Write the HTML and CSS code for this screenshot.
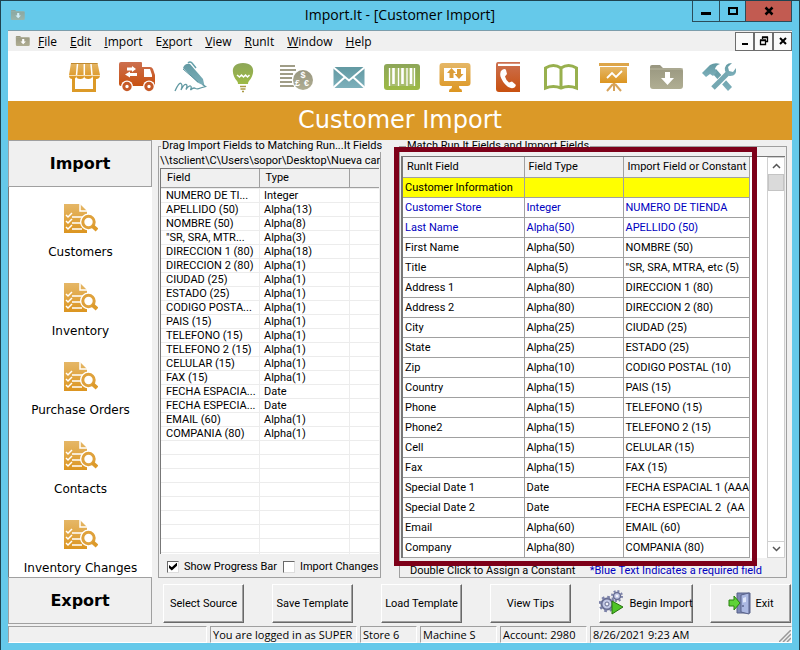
FILE: index.html
```html
<!DOCTYPE html>
<html lang="en">
<head>
	<meta charset="UTF-8">
	<title>Import.It - [Customer Import]</title>
	<link rel="stylesheet" href="styles.css">
</head>
<body>
	<svg class="defs" aria-hidden="true">
		<defs>
			<linearGradient id="gold" x1="0" y1="0" x2="0" y2="1"><stop offset="0" stop-color="#e5b767"/><stop offset="1" stop-color="#dc9520"/></linearGradient>
			<linearGradient id="rust" x1="0" y1="0" x2="0" y2="1"><stop offset="0" stop-color="#cc7050"/><stop offset="1" stop-color="#c8500f"/></linearGradient>
			<linearGradient id="teal" x1="0" y1="0" x2="0" y2="1"><stop offset="0" stop-color="#6299a2"/><stop offset="1" stop-color="#7db0bb"/></linearGradient>
			<linearGradient id="lime" x1="0" y1="0" x2="0" y2="1"><stop offset="0" stop-color="#8da658"/><stop offset="1" stop-color="#9dba45"/></linearGradient>
			<linearGradient id="sand" x1="0" y1="0" x2="0" y2="1"><stop offset="0" stop-color="#98967f"/><stop offset="1" stop-color="#b0ae93"/></linearGradient>
			<symbol id="report" viewBox="0 0 34 30">
				<path d="M0 0h16l7 7v22H0z" fill="url(#gold)"/>
				<path d="M16 0v7h7" fill="none" stroke="#fff" stroke-width="1.5"/>
				<path d="M8 13h11M8 19h9M8 25h10" stroke="#fff" stroke-width="1.6"/>
				<path d="M2 11l2 2 4-4M2 17l2 2 4-4M2 23l2 2 4-4" fill="none" stroke="#fff" stroke-width="1.5"/>
				<circle cx="24.500" cy="18" r="8.500" fill="#fff"/>
				<path d="M28 21l5 5" stroke="#fff" stroke-width="6"/>
				<circle cx="24.500" cy="18" r="5.700" fill="#fff" stroke="#dfa13b" stroke-width="3"/>
				<path d="M28.500 22l4.500 4" stroke="#dd9a2a" stroke-width="4"/>
			</symbol>
			<symbol id="folder" viewBox="0 0 38 34">
				<path d="M2 9V7q0-2 2-2h8l3 3h17q3 0 3 3v15q0 3-3 3H5q-3 0-3-3z" fill="url(#sand)"/>
				<path d="M2 9h33" stroke="#b9b7a0"/>
				<path d="M17 12h5v6h4l-6.500 7-6.500-7h4z" fill="#fff"/>
			</symbol>
		</defs>
	</svg>

	<div class="window">
		<header class="titlebar">
			<svg class="small-icon"><use href="#folder"/></svg>
			<span class="title">Import.It - [Customer Import]</span>
			<div class="window-buttons">
				<button class="minimize" aria-label="Minimize"><svg width="10" height="10"><path d="M0 6h10v3H0z"/></svg></button>
				<button class="maximize" aria-label="Maximize"><svg width="10" height="10"><path d="M1 2h8v6H1z" fill="none" stroke="#000" stroke-width="2"/></svg></button>
				<button class="close" aria-label="Close"><svg width="10" height="10"><path d="M1.500 1.500l7 7M8.500 1.500l-7 7" stroke="#000" stroke-width="2.500"/></svg></button>
			</div>
		</header>

		<nav class="menubar">
			<svg class="small-icon"><use href="#folder"/></svg>
			<button><u>F</u>ile</button>
			<button><u>E</u>dit</button>
			<button><u>I</u>mport</button>
			<button>E<u>x</u>port</button>
			<button><u>V</u>iew</button>
			<button><u>R</u>unIt</button>
			<button><u>W</u>indow</button>
			<button><u>H</u>elp</button>
			<div class="mdi-buttons">
				<button aria-label="Minimize child"><svg width="10" height="10"><path d="M2 7h6v2H2z"/></svg></button>
				<button aria-label="Restore child"><svg width="10" height="10"><path d="M3.500 3V1.500h5v4H7M3 1h6M1.500 4.500h5v4h-5zM1 4h6" fill="none" stroke="#000" stroke-width="1.300"/></svg></button>
				<button aria-label="Close child"><svg width="10" height="10"><path d="M2 2l6 6M8 2l-6 6" stroke="#000" stroke-width="2"/></svg></button>
			</div>
		</nav>

		<div class="toolbar">
			<button aria-label="Store"><svg viewBox="0 0 38 34">
				<path d="M8.500 18v12.500h21V18" fill="none" stroke="#dc9a28" stroke-width="3"/>
				<path d="M6 3h26.500l2.500 12q0 4-3.800 4t-4-3q0 3-4 3t-4-3q0 3-4 3t-4-3q0 3-3.700 3T4 15z" fill="url(#gold)"/>
				<path d="M12.500 4l-1 11M19.300 4v11M26 4l1 11" stroke="#fff" stroke-width="1.500"/>
				<path d="M6 3.500h26.500" stroke="#c08a30"/><path d="M4 15.500h31" stroke="#f5dfb5"/>
			</svg></button>
			<button aria-label="Delivery"><svg viewBox="0 0 38 34">
				<path d="M1 4q0-2 2-2h20q1 0 1 1v4h8q2 0 3 2l2 6v9q0 2-2 2H3q-2 0-2-2z" fill="url(#rust)"/>
				<path d="M26 9h6l2 6v2h-8z" fill="#fff"/>
				<path d="M9 7.500h5V6l4 3-4 3v-1.500H9zM19 13h-7v-1.500l-5 3 5 3V16h7z" fill="#fff"/>
				<circle cx="9" cy="26.500" r="6" fill="#fff"/><circle cx="31" cy="26.500" r="6" fill="#fff"/>
				<circle cx="9" cy="26.500" r="3.200" fill="none" stroke="#c65a28" stroke-width="3"/><circle cx="31" cy="26.500" r="3.200" fill="none" stroke="#c65a28" stroke-width="3"/>
			</svg></button>
			<button aria-label="Signature"><svg viewBox="0 0 38 34">
				<path d="M12 8q2-5 7-4l13 15 1.500 7-7-3.500z" fill="url(#teal)"/>
				<path d="M12 9l15 13" stroke="#5b939e"/><path d="M17 3q2-2 4 0l4 5" fill="none" stroke="#64a0aa" stroke-width="1.500"/>
				<path d="M4 31q4-9 6-7.500t0 6.500q3-6 5-5.500t0 5q3-4 4.500-3.500t0 4q3-3 5-1.500 2 1 5-.5l5-1.500-3-2" fill="none" stroke="#6299a2" stroke-width="1.300"/>
			</svg></button>
			<button aria-label="Ideas"><svg viewBox="0 0 38 34">
				<path d="M19 3c14 0 11 13 6 18q-1 1-1 3H14q0-2-1-3C8 16 5 3 19 3z" fill="url(#lime)"/>
				<path d="M13 15l2.500 2 2-2 2 2 2-2 2 2 2-2" fill="none" stroke="#fff" stroke-width="1.500"/>
				<path d="M16 26.500h6M16.500 29h5M18 31.500h2" stroke="#aa9a45" stroke-width="1.500"/>
			</svg></button>
			<button aria-label="Currency"><svg viewBox="0 0 38 34">
				<path d="M3 6h15M3 10h16M3 14h13M3 18h12M3 22h12M3 26h14" stroke="#a09d87" stroke-width="2"/>
				<circle cx="26" cy="20" r="11" fill="#fff"/><circle cx="26" cy="20" r="10" fill="url(#sand)"/>
				<text class="coin" x="23.500" y="18">$</text><text class="coin" x="18" y="26">£</text><text class="coin" x="27" y="26">€</text>
			</svg></button>
			<button aria-label="Mail"><svg viewBox="0 0 38 34">
				<path d="M3.500 7h31v21h-31z" fill="url(#teal)"/>
				<path d="M3 7l16 13.500L35 7M3 28l12-11M35 28L23 17" fill="none" stroke="#fff" stroke-width="2"/>
			</svg></button>
			<button aria-label="Barcode"><svg viewBox="0 0 38 34">
				<rect x="1" y="4" width="36" height="26" rx="3" fill="url(#lime)"/>
				<path d="M6 8h26v18H6z" fill="#a9bd70"/>
				<path d="M6.500 8v18M15.500 8v18M24 8v18M31.500 8v18" stroke="#fff" stroke-width="1.300"/><path d="M10.500 8v16M19.500 8v16M28 8v16" stroke="#fff" stroke-width="2.600"/>
			</svg></button>
			<button aria-label="Transfer"><svg viewBox="0 0 38 34">
				<path d="M6.500 3h25q3 0 3 3v17q0 3-3 3H23q0 3 2 3 1 0 1 3H13q0-3 1-3 2 0 2-3H6.500q-3 0-3-3V6q0-3 3-3z" fill="url(#gold)"/>
				<path d="M8 8h22v13H8z" fill="#fff"/>
				<path d="M13.500 18v-5H11l4.500-5 4.500 5h-2.500v5zM21 9v5h-2.500l4.500 5 4.500-5H25V9z" fill="#dc9d36"/>
			</svg></button>
			<button aria-label="Phone Book"><svg viewBox="0 0 38 34">
				<path d="M9 2h22v2H9v2h22v26H10q-3 0-3-3V5q0-3 2-3z" fill="url(#rust)"/><path d="M9 4.500h22" stroke="#fff" stroke-width="1.500"/>
				<path d="M13 10q3-2 4 0l1 4-2 2.500q1 4 4 6l3-1 3.500 3q1 1-1 3-3 2-7-1-5-4-7-10-1-5 1.500-6.500z" fill="#fff"/>
			</svg></button>
			<button aria-label="Book"><svg viewBox="0 0 38 34">
				<path d="M3.500 28V8q8-5 15.500 0 7.500-5 15.500 0v20q-8-3-15.500 0-7.500-3-15.500 0zM19 8v20" fill="#fff" stroke="#98b04e" stroke-width="3"/>
			</svg></button>
			<button aria-label="Charts"><svg viewBox="0 0 38 34">
				<path d="M4 3h30v3H4z" fill="#dda549"/><path d="M5 7h27v16H5z" fill="url(#gold)"/>
				<path d="M12 18l5-5 4 4 6-6" fill="none" stroke="#fff" stroke-width="1.800"/>
				<path d="M19 23v8M18 24l-6 7M20 24l6 7" stroke="#d7a35a" stroke-width="2"/>
			</svg></button>
			<button aria-label="Import Folder"><svg><use href="#folder"/></svg></button>
			<button aria-label="Tools"><svg viewBox="0 0 38 34">
				<path d="M11 13l4-4 16 18-4 4z" fill="url(#teal)"/>
				<path d="M29 11L11 30" stroke="#fff" stroke-width="7"/>
				<path d="M27 13L12 28" stroke="#75a8b2" stroke-width="5"/>
				<path d="M1 13l8-8q5-3 10-1-4 1-5 5l2 3-4 4-3-2-4 3z" fill="url(#teal)"/>
				<path d="M31 3q-8 0-7 8l4 5q8 1 7-8l-3 4-4-1-1-4z" fill="url(#teal)"/>
			</svg></button>
		</div>

		<h1 class="banner">Customer Import</h1>

		<main class="workspace">
			<aside class="sidebar">
				<button class="section">Import</button>
				<div class="items">
					<button class="item"><svg><use href="#report"/></svg>Customers</button>
					<button class="item"><svg><use href="#report"/></svg>Inventory</button>
					<button class="item"><svg><use href="#report"/></svg>Purchase Orders</button>
					<button class="item"><svg><use href="#report"/></svg>Contacts</button>
					<button class="item"><svg><use href="#report"/></svg>Inventory Changes</button>
				</div>
				<button class="section">Export</button>
			</aside>

			<fieldset class="group source">
				<legend>Drag Import Fields to Matching Run...It Fields</legend>
				<div class="path">\\tsclient\C\Users\sopor\Desktop\Nueva carp</div>
				<div class="listbox">
					<table>
						<thead><tr><th class="col-field">Field</th><th class="col-type">Type</th><th></th></tr></thead>
						<tbody>
							<tr><td>NUMERO DE TI...</td><td>Integer</td><td></td></tr>
							<tr><td>APELLIDO (50)</td><td>Alpha(13)</td><td></td></tr>
							<tr><td>NOMBRE (50)</td><td>Alpha(8)</td><td></td></tr>
							<tr><td>"SR, SRA, MTR...</td><td>Alpha(3)</td><td></td></tr>
							<tr><td>DIRECCION 1 (80)</td><td>Alpha(18)</td><td></td></tr>
							<tr><td>DIRECCION 2 (80)</td><td>Alpha(1)</td><td></td></tr>
							<tr><td>CIUDAD (25)</td><td>Alpha(1)</td><td></td></tr>
							<tr><td>ESTADO (25)</td><td>Alpha(1)</td><td></td></tr>
							<tr><td>CODIGO POSTA...</td><td>Alpha(1)</td><td></td></tr>
							<tr><td>PAIS (15)</td><td>Alpha(1)</td><td></td></tr>
							<tr><td>TELEFONO (15)</td><td>Alpha(1)</td><td></td></tr>
							<tr><td>TELEFONO 2 (15)</td><td>Alpha(1)</td><td></td></tr>
							<tr><td>CELULAR (15)</td><td>Alpha(1)</td><td></td></tr>
							<tr><td>FAX (15)</td><td>Alpha(1)</td><td></td></tr>
							<tr><td>FECHA ESPACIA...</td><td>Date</td><td></td></tr>
							<tr><td>FECHA ESPECIA...</td><td>Date</td><td></td></tr>
							<tr><td>EMAIL (60)</td><td>Alpha(1)</td><td></td></tr>
							<tr><td>COMPANIA (80)</td><td>Alpha(1)</td><td></td></tr>
						</tbody>
					</table>
				</div>
				<div class="options">
					<label for="progress"><input type="checkbox" id="progress" checked>Show Progress Bar</label>
					<label for="changes"><input type="checkbox" id="changes">Import Changes</label>
				</div>
			</fieldset>

			<fieldset class="group match">
				<legend>Match Run It Fields and Import Fields</legend>
				<div class="grid-box">
					<table>
						<thead><tr><th>RunIt Field</th><th>Field Type</th><th>Import Field or Constant</th></tr></thead>
						<tbody>
							<tr class="heading"><td>Customer Information</td><td></td><td></td></tr>
							<tr class="required"><td>Customer Store</td><td>Integer</td><td>NUMERO DE TIENDA</td></tr>
							<tr class="required"><td>Last Name</td><td>Alpha(50)</td><td>APELLIDO (50)</td></tr>
							<tr><td>First Name</td><td>Alpha(50)</td><td>NOMBRE (50)</td></tr>
							<tr><td>Title</td><td>Alpha(5)</td><td>"SR, SRA, MTRA, etc (5)</td></tr>
							<tr><td>Address 1</td><td>Alpha(80)</td><td>DIRECCION 1 (80)</td></tr>
							<tr><td>Address 2</td><td>Alpha(80)</td><td>DIRECCION 2 (80)</td></tr>
							<tr><td>City</td><td>Alpha(25)</td><td>CIUDAD (25)</td></tr>
							<tr><td>State</td><td>Alpha(25)</td><td>ESTADO (25)</td></tr>
							<tr><td>Zip</td><td>Alpha(10)</td><td>CODIGO POSTAL (10)</td></tr>
							<tr><td>Country</td><td>Alpha(15)</td><td>PAIS (15)</td></tr>
							<tr><td>Phone</td><td>Alpha(15)</td><td>TELEFONO (15)</td></tr>
							<tr><td>Phone2</td><td>Alpha(15)</td><td>TELEFONO 2 (15)</td></tr>
							<tr><td>Cell</td><td>Alpha(15)</td><td>CELULAR (15)</td></tr>
							<tr><td>Fax</td><td>Alpha(15)</td><td>FAX (15)</td></tr>
							<tr><td>Special Date 1</td><td>Date</td><td>FECHA ESPACIAL 1 (AAA</td></tr>
							<tr><td>Special Date 2</td><td>Date</td><td>FECHA ESPECIAL 2&nbsp; (AA</td></tr>
							<tr><td>Email</td><td>Alpha(60)</td><td>EMAIL (60)</td></tr>
							<tr><td>Company</td><td>Alpha(80)</td><td>COMPANIA (80)</td></tr>
						</tbody>
					</table>
					<div class="scrollbar">
						<button aria-label="Scroll up"><svg width="9" height="6"><path d="M1 5l3.500-3.500L8 5" fill="none" stroke="#555" stroke-width="1.500"/></svg></button>
						<div class="thumb"></div>
						<button class="down" aria-label="Scroll down"><svg width="9" height="6"><path d="M1 1l3.500 3.500L8 1" fill="none" stroke="#555" stroke-width="1.500"/></svg></button>
					</div>
				</div>
				<div class="hints"><span>Double Click to Assign a Constant</span><span class="note">*Blue Text Indicates a required field</span></div>
				<div class="highlight"></div>
			</fieldset>

			<div class="actions">
				<button>Select Source</button>
				<button>Save Template</button>
				<button>Load Template</button>
				<button>View Tips</button>
				<button class="begin"><svg width="26" height="26" viewBox="0 0 26 26">
					<circle cx="8" cy="14" r="5.500" fill="#c3c9e6" stroke="#676d92" stroke-width="2"/>
					<circle cx="8" cy="14" r="7" fill="none" stroke="#7c82a8" stroke-width="2.500" stroke-dasharray="2.700 2.800"/>
					<circle cx="8" cy="14" r="2" fill="#f3f3fa" stroke="#676d92"/>
					<circle cx="18" cy="6" r="3.500" fill="#c3c9e6" stroke="#676d92" stroke-width="1.500"/>
					<circle cx="18" cy="6" r="5" fill="none" stroke="#7c82a8" stroke-width="2" stroke-dasharray="2 1.900"/>
					<circle cx="18" cy="6" r="1.300" fill="#f3f3fa"/>
					<path d="M13 11l11 6-11 7z" fill="#4fc427" stroke="#26730f"/>
				</svg>Begin Import</button>
				<button class="exit"><svg width="24" height="24" viewBox="0 0 24 24">
					<path d="M9 2h13v20H9z" fill="#7d88b4" stroke="#59628a"/>
					<path d="M13 4l8-2v21l-8-2z" fill="#abb8e2" stroke="#59628a"/>
					<path d="M15 7l3-1v5l-3 .5z" fill="#dfe6fa"/><path d="M15 14v2" stroke="#39406a"/>
					<path d="M1 9h5V5l6 7-6 7v-4H1z" fill="#5ed336" stroke="#28810f"/>
				</svg>Exit</button>
			</div>
		</main>

		<footer class="statusbar">
			<span class="blank"></span>
			<span class="user">You are logged in as SUPER</span>
			<span class="store">Store 6</span>
			<span class="machine">Machine S</span>
			<span class="account">Account: 2980</span>
			<span class="clock">8/26/2021 9:23 AM<svg width="12" height="12"><path d="M0 12L12 0M4 12l8-8M8 12l4-4" stroke="#999" stroke-width="1.500"/></svg></span>
		</footer>
	</div>
</body>
</html>
```

FILE: styles.css
```css
* {
	box-sizing: border-box;
}

body {
	margin: 0;
	font-family: Roboto, "Liberation Sans", sans-serif;
	font-size: 11px;
	color: #000;
}

button {
	margin: 0;
	padding: 0;
	border: 0;
	background: none;
	font: inherit;
	color: inherit;
}

svg {
	flex: none;
}

.defs {
	position: absolute;
	width: 0;
	height: 0;
}

.window {
	display: flex;
	flex-direction: column;
	min-height: 100vh;
	padding: 0 7px 7px;
	border: 1px solid #1e4350;
	background: #65c9ea;
}

/* title bar and menu */
.titlebar {
	display: grid;
	grid-template-columns: 1fr auto 1fr;
	height: 29px;
	font: 14px "Open Sans", sans-serif;
}

.small-icon {
	width: 16px;
	height: 16px;
}

.titlebar .small-icon {
	margin: 6px 2px;
	opacity: 0.7;
}

.title {
	line-height: 28px;
}

.window-buttons {
	display: flex;
	justify-self: end;
	height: 21px;
	border: 1px solid #2b4c5a;
	border-top: 0;
}

.window-buttons button {
	display: grid;
	place-items: center;
	width: 26px;
}

.window-buttons button + button {
	border-left: 1px solid #2b4c5a;
}

.window-buttons .close {
	width: 46px;
	background: #c25b51;
}

.menubar {
	display: flex;
	align-items: center;
	gap: 13px;
	height: 21px;
	padding-left: 7px;
	border-top: 1px solid #7c9dab;
	background: #f0f0f0;
	font: 12px "Open Sans", sans-serif;
}

.menubar .small-icon {
	margin-right: -6px;
}

.mdi-buttons {
	display: flex;
	margin-left: auto;
}

.mdi-buttons button {
	display: grid;
	place-items: center;
	width: 19px;
	height: 19px;
	border: 1px solid #6d6d6d;
	background: #fafafa;
}

.toolbar {
	display: flex;
	justify-content: center;
	height: 50px;
	padding: 9px 0 0 4px;
	background: #fff;
}

.toolbar button {
	width: 53px;
	height: 34px;
}

.toolbar svg {
	width: 38px;
	height: 34px;
}

.coin {
	font: bold 9px "Liberation Sans", sans-serif;
	fill: #fff;
}

.banner {
	margin: 0;
	background: #db9927;
	color: #fff;
	font: 24px/39px "DejaVu Sans", Verdana, sans-serif;
	text-align: center;
}

/* main area */
.workspace {
	flex: 1;
	display: grid;
	grid-template-columns: 144px minmax(0, 229fr) minmax(0, 411fr);
	grid-template-rows: 1fr 46px;
	background: #f0f0f0;
}

.sidebar {
	grid-row: 1 / 3;
	display: flex;
	flex-direction: column;
	font: 12px "DejaVu Sans", Verdana, sans-serif;
}

.section {
	height: 47px;
	border: 1px solid #a0a0a0;
	background: #f0f0f0;
	font-size: 16px;
	font-weight: bold;
}

.items {
	flex: 1;
	display: flex;
	flex-direction: column;
	gap: 17px;
	padding-top: 17px;
	border-left: 1px solid #777;
	background: #fff;
}

.item {
	display: flex;
	flex-direction: column;
	align-items: center;
	gap: 11px;
	height: 62px;
}

.item:last-child {
	height: 55px;
}

.item svg {
	width: 34px;
	height: 30px;
}

.group {
	position: relative;
	display: flex;
	flex-direction: column;
	min-width: 0;
	margin: 0;
	padding: 0;
	border: 1px solid #a0a0a0;
}

.group legend {
	margin-left: 2px;
	padding: 0 1px;
	line-height: 12px;
	white-space: nowrap;
}

.source {
	margin-left: 6px;
}

.path {
	overflow: hidden;
	padding: 2px 0 0 1px;
	line-height: 14px;
	white-space: nowrap;
}

.listbox {
	flex: 1;
	margin: 0 1px;
	border-top: 1px solid #777;
	border-left: 1px solid #777;
	background:
		linear-gradient(#ececec, #ececec) 98px 0 / 1px 100% no-repeat,
		linear-gradient(#ececec, #ececec) 188px 0 / 1px 100% no-repeat,
		repeating-linear-gradient(#ececec 0 1px, #fff 1px 14px) 0 19px;
}

table {
	border-collapse: collapse;
	table-layout: fixed;
}

th {
	font-weight: normal;
	text-align: left;
	background: #f0f0f0;
}

th, td {
	overflow: hidden;
	white-space: nowrap;
}

.listbox table {
	width: 100%;
}

.listbox th {
	height: 18px;
	padding: 0 6px;
	border-right: 1px solid #a0a0a0;
	border-bottom: 1px solid #a0a0a0;
}

.listbox th:last-child {
	border-right: 0;
}

.col-field {
	width: 98px;
}

.col-type {
	width: 90px;
}

.listbox td {
	height: 14px;
	padding: 2px 0 0 5px;
	line-height: 12px;
}

.options {
	display: flex;
	gap: 6px;
	height: 23px;
	padding: 3px 0 0 8px;
}

.options label {
	display: flex;
	align-items: center;
	gap: 5px;
	white-space: nowrap;
}

.options input {
	appearance: none;
	display: grid;
	place-items: center;
	width: 12px;
	height: 12px;
	margin: 0;
	border: 1px solid;
	border-color: #696969 #ddd #ddd #696969;
	background: #fff;
}

.options input:checked::before {
	content: "";
	width: 8px;
	height: 8px;
	background: #000;
	clip-path: polygon(0 30%, 35% 60%, 100% 0, 100% 40%, 35% 100%, 0 70%);
}

.match {
	margin: 0 5px 0 18px;
}

.match legend {
	margin-left: 6px;
}

.grid-box {
	flex: 1;
	display: flex;
	justify-content: space-between;
	margin: 4px 1px 0;
	border-top: 1px solid #777;
	border-left: 2px solid #777;
	background: #fff;
}

.grid-box table {
	align-self: flex-start;
	width: 346px;
}

.grid-box th, .grid-box td {
	height: 20px;
	padding: 0 2px;
	border-right: 1px solid #a0a0a0;
	border-bottom: 1px solid #a0a0a0;
}

.grid-box th {
	width: 99px;
	padding: 0 4px;
}

.grid-box th:first-child {
	width: 121px;
}

.grid-box th:last-child {
	width: 126px;
}

.heading {
	background: #ff0;
}

.required, .note {
	color: #0000c0;
}

.scrollbar {
	display: flex;
	flex-direction: column;
	width: 18px;
	border: 1px solid #d0d0d0;
	background: #fff;
}

.scrollbar button {
	height: 16px;
	line-height: 0;
}

.scrollbar .down {
	margin-top: auto;
	border-top: 1px solid #d0d0d0;
}

.thumb {
	height: 17px;
	border: 1px solid #c4c4c4;
	background: #dadada;
}

.hints {
	display: flex;
	justify-content: space-between;
	height: 19px;
	padding: 6px 24px 0 10px;
	line-height: 13px;
	white-space: nowrap;
}

/* callout frame drawn over the grid */
.highlight {
	position: absolute;
	top: -5px;
	right: 29px;
	bottom: 11px;
	left: -6px;
	border: 5px solid #7d0019;
	pointer-events: none;
}

.actions {
	grid-column: 2 / 4;
	display: flex;
	gap: 28px;
	padding: 6px 1px 0 11px;
}

.actions button {
	display: flex;
	flex: none;
	align-items: center;
	justify-content: center;
	gap: 4px;
	width: 81px;
	height: 39px;
	border: 1px solid;
	border-color: #fff #696969 #696969 #fff;
	box-shadow: inset -1px -1px #a0a0a0;
	white-space: nowrap;
}

.actions .begin {
	width: 94px;
	margin-right: -14px;
}

.actions .exit {
	margin-left: auto;
}

.statusbar {
	display: flex;
	gap: 3px;
	height: 19px;
	padding-top: 2px;
	background: #f0f0f0;
	font: 11px/15px "Open Sans", sans-serif;
}

.statusbar span {
	padding-left: 2px;
	border: 1px solid;
	border-color: #a0a0a0 #fff #fff #a0a0a0;
	white-space: nowrap;
}

.blank {
	width: 199px;
}

.user {
	width: 147px;
}

.store {
	width: 57px;
}

.machine {
	width: 77px;
}

.account {
	width: 87px;
}

.clock {
	flex: 1;
	display: flex;
	justify-content: space-between;
	align-items: flex-end;
}
```
